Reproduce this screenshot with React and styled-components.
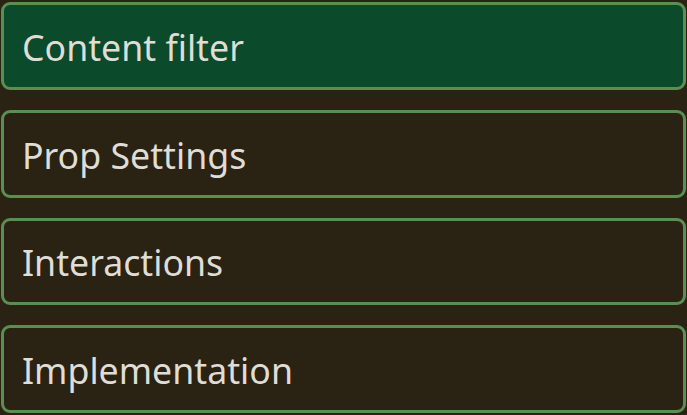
import React from "react";
import styled, { createGlobalStyle } from "styled-components";

const Global = createGlobalStyle`
	html, body {
		margin: 0;
		padding: 0;
		background: #2a2212;
	}
	* {
		box-sizing: border-box;
	}
`;

const Menu = styled.div`
	display: flex;
	flex-direction: column;
	gap: 20px;
	padding: 2px 1px;
	width: 687px;
	height: 415px;
	background: #2a2212;
`;

const Item = styled.div`
	display: flex;
	align-items: center;
	height: 88px;
	padding: 2px 18px 0;
	border: 3px solid #5a8f52;
	border-radius: 9px;
	background: ${(p) => (p.active ? "#0b4a2b" : "#2a2212")};
	color: #dfddd6;
	font-family: "Noto Sans", "Open Sans", sans-serif;
	font-size: 35.7px;
`;

const items = ["Content filter", "Prop Settings", "Interactions", "Implementation"];

export default function App() {
	return (
		<>
			<Global />
			<Menu>
				{items.map((label, i) => (
					<Item key={label} active={i === 0}>
						{label}
					</Item>
				))}
			</Menu>
		</>
	);
}
